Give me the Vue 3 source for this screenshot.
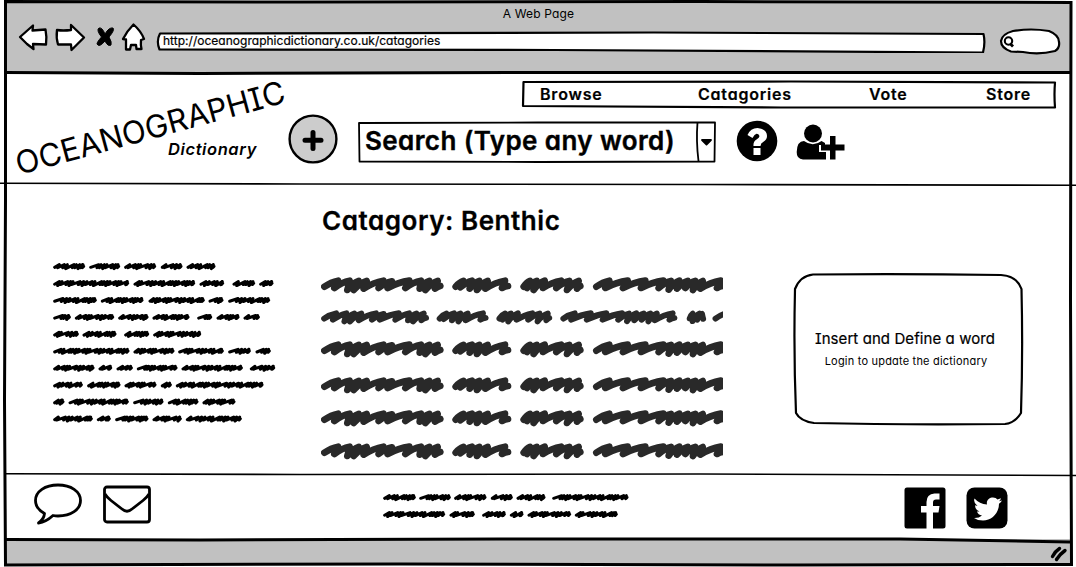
<script setup>
const navItems = [
  { id: 'browse', label: 'Browse' },
  { id: 'categories', label: 'Catagories' },
  { id: 'vote', label: 'Vote' },
  { id: 'store', label: 'Store' },
]

// Heavy marker words, each a list of zigzag points
const markerWords = [
  [43,65,84,47,73,69,119,47,112,75,146,48,131,75,170,48,161,71,220,47,206,69,246,49,233,69,298,47,286,69,333,47,329,71,358,48,346,75,383,48,375,71,391,63],
  [437,65,460,48,451,67,486,47,479,71,508,48,501,75,533,48,526,71,585,47,576,69,594,63],
  [641,65,660,48,651,69,680,48,671,75,704,47,699,69,753,47,739,69,778,48,771,75,806,48,801,71,811,63],
  [859,65,898,47,886,69,953,47,939,69,1006,47,993,69,1060,47,1046,69,1083,48,1076,74,1108,47,1101,71,1133,48,1126,69,1156,48,1149,75,1178,48,1171,71,1232,47,1221,69,1238,63],
  [1290,65,1300,48,1300,74,1323,48,1316,69,1332,49,1336,66],
  [1378,65,1420,46],
]
const markerPath = markerWords.map(toPath).join(' ')
const markerRows = [
  { id: 1, size: 'full' },
  { id: 2, size: 'small' },
  { id: 3, size: 'full' },
  { id: 4, size: 'full' },
  { id: 5, size: 'full' },
  { id: 6, size: 'full' },
]

// Strokes bow outward on the way up and swing back down under the peak
function toPath(points) {
  let d = `M${points[0]} ${points[1]}`
  for (let i = 2; i < points.length; i += 2) {
    const x = points[i]
    const y = points[i + 1]
    const px = points[i - 2]
    const py = points[i - 1]
    d += y < py
      ? `Q${px + (x - px) * 0.5} ${py + (y - py) * 0.8} ${x} ${y}`
      : `Q${x + (px - x) * 0.6} ${py + (y - py) * 0.5} ${x} ${y}`
  }
  return d
}

// Fine scribbled words: [start, end] spans per line
const sideLines = [
  [[40,135],[148,240],[253,348],[363,427],[440,526]],
  [[40,267],[281,465],[479,552],[578,645],[658,700]],
  [[40,170],[183,310],[326,494],[506,550],[565,690]],
  [[40,92],[105,222],[235,325],[338,448],[472,516],[530,598],[611,659]],
  [[40,116],[128,229],[253,327],[340,483]],
  [[40,268],[281,403],[415,551],[565,632],[647,692]],
  [[40,163],[176,216],[230,278],[291,412],[425,608],[630,705]],
  [[40,128],[142,241],[254,349],[363,395],[408,670]],
  [[40,73],[86,266],[280,370],[384,475],[488,586]],
  [[40,158],[171,212],[226,325],[338,425],[438,605]],
]
const footLines = [
  [[40,137],[148,242],[253,349],[363,428],[440,526],[547,775]],
  [[40,225],[239,314],[337,407],[420,460],[473,603],[615,743]],
]
const steps = [14, 19, 13, 24, 11, 14, 12, 21, 13, 11, 25, 15]

function scribble(lines) {
  return lines
    .map((words, row) => {
      const y = 13 + row * 50.8
      return words
        .map(([a, b], w) => {
          let x = a + 4
          let k = row * 5 + w * 3
          let d = `M${x} ${y + 3}`
          while (x < b - 19) {
            const s = steps[k++ % steps.length]
            const dip = k % 3 === 0 ? 7 : 4
            const top = Math.min(x + s, b - 5)
            d += `L${top} ${y - 5}L${top - 5} ${y + dip}`
            x += s - 4
          }
          return d + `L${b - 6} ${y - 5}L${b - 8} ${y + 4}L${b - 4} ${y}`
        })
        .join('')
    })
    .join('')
}
const sidePath = scribble(sideLines)
const footPath = scribble(footLines)
</script>

<template>
  <div class="window">
    <header class="chrome">
      <div class="title">A Web Page</div>
      <div class="toolbar">
        <svg class="controls" width="132" height="32" viewBox="0 0 132 32">
          <g fill="#fff" stroke="#000" stroke-width="2.3" stroke-linejoin="round">
            <path d="M6 15 19 3.500 18.500 8.500 31.500 7.500Q33 15 32 22.500L19 22 19.500 27 13 22Z" />
            <path d="M43 8Q49 9 57 8L57 3 70 15.500 57.500 28 57 22.500 44 22.500Q42 16 43 8Z" />
            <path d="M119.500 2.500Q127 9 130 17L127 18Q126.500 23 127.500 27L122.500 27 122 23 117 23 116 27.500 112 27.500Q112 22 112 17.500L109 17Q113 9 119.500 2.500Z" />
          </g>
          <path d="M85 6Q88 5 91 12Q95 5 99 6Q101 8 95 15Q98 20 97 23Q94 25 91 19Q85 26 83 22Q83 20 87.500 15Q82 8 85 6Z" stroke="#000" />
        </svg>
        <div class="url">
          <svg width="832" height="24" viewBox="0 0 832 24" class="backing">
            <path d="M6 4.500Q2 12 5.500 20.500L400 21 829 23.500Q831.500 14 829.500 5L500 3.500Z" />
          </svg>
          <span class="url-text">http://oceanographicdictionary.co.uk/catagories</span>
        </div>
        <svg class="find" width="62" height="28" viewBox="0 0 62 28">
          <path d="M14 4Q32 1 50 4Q60 8 60 15Q61 21 56 24Q40 28 24 25L12 24.500Q2 21 2 14Q3 7 14 4Z" fill="#fff" stroke="#000" stroke-width="2.200" />
          <circle cx="9.500" cy="14" r="3.700" fill="none" stroke="#000" stroke-width="2.100" />
          <path d="M11 16.500 14 19.500" stroke="#000" stroke-width="2.800" />
        </svg>
      </div>
    </header>

    <section class="masthead">
      <div class="brand">
        <svg class="brand-art" width="284" height="110" viewBox="6 74 284 110">
          <text x="0" y="0" transform="translate(19 176) rotate(-15.200)" class="brand-name" textLength="278" lengthAdjust="spacingAndGlyphs">OCEANOGRAPHIC</text>
        </svg>
        <span class="brand-sub">Dictionary</span>
      </div>
      <div class="tools">
        <nav class="nav">
          <svg class="backing" width="536" height="31" viewBox="0 0 536 31">
            <path d="M2.500 3 270 2.500 534 3.500Q533 15 534 28.500L260 28.500 2 27Z" />
          </svg>
          <a v-for="item in navItems" :key="item.id" :class="['nav-item', item.id]">{{ item.label }}</a>
        </nav>
        <div class="actions">
          <svg class="add" width="50" height="50" viewBox="0 0 50 50">
            <circle cx="25" cy="25" r="23.400" fill="#ccc" stroke="#000" stroke-width="2.400" />
            <path d="M17 26.300H33M25 18.500V34.500" stroke="#000" stroke-width="5" stroke-linecap="round" />
          </svg>
          <div class="search">
            <svg class="backing thin" width="358" height="42" viewBox="0 0 358 42">
              <path d="M1 2 180 1.500 357 1.500 356.500 40.500 180 41 1.500 40.500Z" />
              <path d="M339.500 1.500Q338 20 340.500 40" />
              <path d="M344 19H353L348.500 23.500Z" class="caret" />
            </svg>
            <span class="search-text">Search (Type any word)</span>
          </div>
          <svg class="help" width="42" height="42" viewBox="0 0 42 42">
            <circle cx="21" cy="21" r="20.300" />
            <path d="M11.500 15Q14.500 8 21.500 8Q31 9 31 16Q31 19.500 27.500 21.700Q24.500 23.300 24.500 26H17.500Q17 21.500 20.500 19.500Q23.500 17.800 23.500 16Q22.500 13.500 20.500 13.700Q18.500 14 16.500 18Z" fill="#fff" />
            <rect x="17.500" y="28" width="7" height="7" fill="#fff" />
          </svg>
          <svg class="user" width="50" height="38" viewBox="0 0 50 38">
            <circle cx="17" cy="10.500" r="9" />
            <path d="M8 18Q17 24.500 25.500 18L29 20V22H23V29H30V36.500H7Q.500 36 .700 29Q1 18 8 18Z" />
            <path d="M34 13H39.500V21.500H48.500V27.500H39.500V36.500H34V27.500H25V21.500H34Z" />
          </svg>
        </div>
      </div>
    </section>

    <main class="content">
      <aside class="side">
        <svg width="224" height="162" viewBox="39 0 672 486" class="fine"><path :d="sidePath" /></svg>
      </aside>
      <article class="entry">
        <h1>Catagory: Benthic</h1>
        <div class="marker-rows">
          <svg
            v-for="row in markerRows"
            :key="row.id"
            :class="['marker', row.size]"
            width="402"
            height="18"
            :viewBox="row.size === 'small' ? '33 29 1370 61.400' : '33 33 1206 54'"
          >
            <path :d="markerPath" />
          </svg>
        </div>
      </article>
      <aside class="define">
        <svg class="backing" width="231" height="154" viewBox="0 0 231 154">
          <path d="M20 2.500Q110 1.500 208 3Q224 4 228.500 17Q230 80 228 141Q222 151 212 152Q110 153 21 151Q7 149 3 141Q.500 80 2 17Q7 4 20 2.500Z" />
        </svg>
        <p class="define-title">Insert and Define a word</p>
        <p class="define-note">Login to update the dictionary</p>
      </aside>
    </main>

    <footer class="footer">
      <svg width="48" height="42" viewBox="0 0 48 42" class="outline">
        <path d="M24 2C37 2 46.500 8.500 46.500 17.500S37 33 24 33Q21.500 33 19 32.500Q12 39 4.500 40Q10 36 10.500 30.500Q1.500 25.500 1.500 17.500C1.500 8.500 11 2 24 2Z" />
      </svg>
      <svg width="48" height="39" viewBox="0 0 48 39" class="outline mail">
        <rect x="1.500" y="2" width="45" height="35" rx="2.500" />
        <path d="M2 9Q4 12.500 8 15.500L19 24Q24 28.500 29 24L40 15.500Q44 12.500 46 9" />
      </svg>
      <svg width="248" height="28" viewBox="39 0 744 84" class="fine foot-text"><path :d="footPath" /></svg>
      <svg width="42" height="42" viewBox="0 0 42 42" class="facebook">
        <rect x=".500" y=".500" width="41" height="41" rx="2.500" />
        <path d="M22.500 42V25.500H17V19H22.500V15Q22.500 7 30.500 6.500H35.500V12.500H32Q29 12.500 29 15.500V19H35.500L34.500 25.500H29V42Z" fill="#fff" />
      </svg>
      <svg width="42" height="42" viewBox="0 0 42 42">
        <rect x=".500" y=".500" width="41" height="41" rx="8" />
        <path d="M8.500 11.500Q13.500 17 21 17.500C20 13 23.500 10.500 27 10.500Q30 10.500 31.500 12.500L35 11.200Q34.500 13 33 14.300L36 13.500Q35 15.300 33 16.700C33 26 26 33.500 17 33.500Q11.500 33.500 8 31Q13 31.200 16 28.500Q12 28 11 24.500H13.500Q9 22.800 9 18.300L11.500 19Q7 15.500 8.500 11.500Z" fill="#fff" />
      </svg>
    </footer>

    <div class="status">
      <svg width="18" height="16" viewBox="0 0 18 16">
        <path d="M2.500 10.500Q5.500 5 9.500 2.500M6.500 13.500Q10 8 15 4.500" />
      </svg>
    </div>

    <svg class="frame" width="1076" height="567" viewBox="0 0 1076 567">
      <path d="M5.500 1.500 300 2 700 1.500 1071 2.500 1070.500 300 1071.500 564.500 800 565 400 564 5.500 565 4.500 400 5.500 200Z" class="heavy" />
      <path d="M5 72.500 200 73.500 540 72.500 1070 72.500" class="heavy" />
      <path d="M5 539.500 200 540 500 539 900 539 1070 542" class="heavy" />
      <path d="M0 183.300 300 184 700 184.500 1076 185.200" class="rule" />
      <path d="M6 473.800 300 474.500 700 474 1076 475.500" class="rule" />
    </svg>
  </div>
</template>

<style>
body { margin: 0; background: #fff; }
</style>

<style scoped>
.window {
  position: relative;
  width: 1076px;
  height: 567px;
  box-sizing: border-box;
  overflow: hidden;
  display: flex;
  flex-direction: column;
  padding: 1px 5px 2px 6px;
  color: #000;
  font-family: Inter, "Open Sans", sans-serif;
  font-feature-settings: "cv11", "cv08";
  white-space: nowrap;
}
svg { display: block; flex: none; }
p, h1 { margin: 0; }
.frame { position: absolute; left: 0; top: 0; pointer-events: none; }
.heavy { fill: none; stroke: #000; stroke-width: 3; }
.rule { fill: none; stroke: #000; stroke-width: 1.6; }
.backing { position: absolute; left: 0; top: 0; z-index: 0; }
.backing path { fill: #fff; stroke: #000; stroke-width: 2.2; stroke-linejoin: round; }
.backing.thin path { stroke-width: 1.8; }
.backing .caret { fill: #000; stroke-width: 0.6; }

.chrome { height: 72px; background: #c1c1c1; flex: none; }
.title { height: 22px; padding-top: 4px; box-sizing: border-box; font-size: 12px; line-height: 17px; text-align: center; letter-spacing: 0.15px; }
.toolbar { display: flex; align-items: flex-start; padding-left: 8px; }
.controls { margin-top: -1px; }
.url { position: relative; width: 832px; height: 24px; margin: 6px 0 0 8px; }
.url-text { position: relative; display: block; padding-left: 9px; font-size: 12px; line-height: 24px; letter-spacing: 0.02px; -webkit-text-stroke: 0.2px #000; }
.find { margin: 4px 0 0 13px; }

.masthead { height: 111px; display: flex; flex: none; }
.brand { position: relative; width: 282px; }
.brand-art { overflow: visible; }
.brand-name { font-size: 31.5px; }
.brand-sub { position: absolute; left: 162px; top: 65px; font-size: 16.5px; line-height: 22px; font-weight: 600; font-style: italic; letter-spacing: 0.6px; }
.tools { flex: 1; }
.nav { position: relative; display: flex; width: 536px; height: 31px; margin: 6px 0 0 233px; align-items: center; }
.nav-item { position: relative; box-sizing: border-box; font-size: 16px; font-weight: 600; line-height: 29px; letter-spacing: 0.8px; -webkit-text-stroke: 0.2px #000; }
.browse { width: 177px; padding-left: 19px; }
.categories { width: 171px; }
.vote { width: 117px; }
.actions { display: flex; align-items: flex-start; padding-top: 4px; }
.search { position: relative; width: 358px; height: 42px; margin: 7px 0 0 20px; }
.search-text { position: relative; display: block; padding-left: 7px; font-size: 26px; font-weight: 600; line-height: 40px; letter-spacing: 0.4px; -webkit-text-stroke: 0.4px #000; }
.help { margin: 6px 0 0 20px; }
.user { margin: 9px 0 0 18px; }

.content { height: 290px; display: flex; flex: none; }
.side { width: 315px; padding: 78px 0 0 47px; box-sizing: border-box; }
.fine path { fill: none; stroke: #000; stroke-width: 9; stroke-linejoin: round; stroke-linecap: round; }
.entry { width: 472px; padding-top: 20px; }
h1 { padding-left: 1px; font-size: 26px; line-height: 34px; font-weight: 600; letter-spacing: 0.55px; -webkit-text-stroke: 0.3px #000; }
.marker-rows { display: grid; grid-template-rows: 32px 32px 35.5px 33px 33px 20px; padding-top: 38px; }
.marker path { fill: none; stroke: #292929; stroke-width: 20; stroke-linejoin: round; stroke-linecap: round; }
.define { position: relative; width: 231px; height: 154px; margin-top: 88px; text-align: center; }
.define-title { position: relative; padding: 57px 7px 0 0; font-size: 15px; line-height: 20px; letter-spacing: 0.08px; -webkit-text-stroke: 0.2px #000; }
.define-note { position: relative; padding: 4px 5px 0 0; font-size: 11px; line-height: 16px; letter-spacing: 0.2px; }

.footer { height: 65px; display: flex; align-items: flex-start; padding: 9px 0 0 28px; box-sizing: border-box; flex: none; }
.outline { fill: none; stroke: #000; stroke-width: 2.8; stroke-linejoin: round; }
.mail { margin: 2px 0 0 21px; }
.foot-text { margin: 10px 0 0 232px; }
.facebook { margin-left: 273px; margin-right: 20px; }
.footer > svg:nth-last-child(-n+2) { margin-top: 4px; }
.status { flex: 1; background: #c1c1c1; display: flex; justify-content: flex-end; padding: 7px 3px 0 0; }
.status path { fill: none; stroke: #000; stroke-width: 3.4; stroke-linecap: round; }
</style>
